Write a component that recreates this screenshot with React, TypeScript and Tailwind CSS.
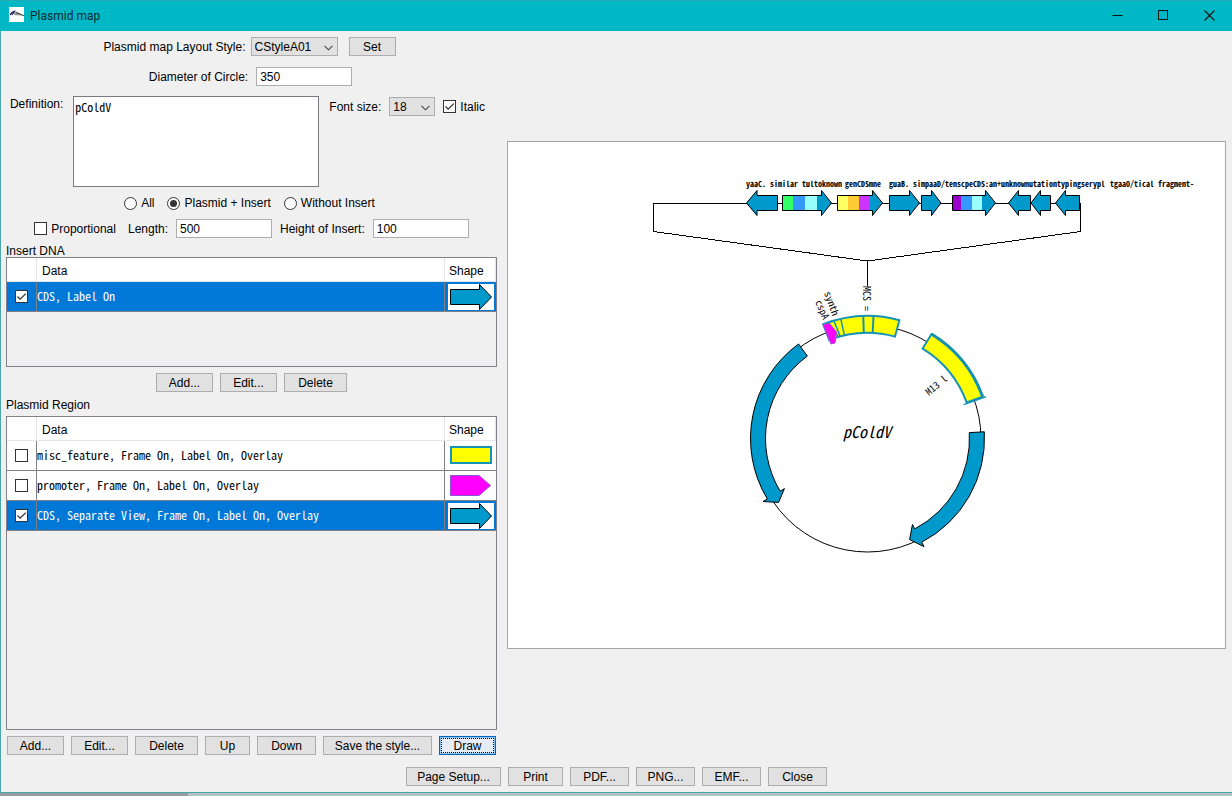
import type { ReactNode } from "react";

const CX = 867.5;
const CY = 438.5;

function pt(r: number, deg: number) {
  const a = (deg * Math.PI) / 180;
  return `${(CX + r * Math.cos(a)).toFixed(2)} ${(CY + r * Math.sin(a)).toFixed(2)}`;
}

function band(outer: number, inner: number, from: number, to: number) {
  return `M${pt(outer, from)}A${outer} ${outer} 0 0 1 ${pt(outer, to)}L${pt(inner, to)}A${inner} ${inner} 0 0 0 ${pt(inner, from)}Z`;
}

function arcArrow(from: number, to: number, tip: number) {
  const s = to > from ? 1 : 0;
  return `M${pt(117, from)}A117 117 0 0 ${s} ${pt(117, to)}L${pt(122, to)}L${pt(109.5, tip)}L${pt(97, to)}L${pt(102, to)}A102 102 0 0 ${1 - s} ${pt(102, from)}Z`;
}

type Gene = { tail: number; neck: number; tip: number; bands?: [number, number, string][] };

const genes: Gene[] = [
  { tail: 777.5, neck: 757, tip: 746.5 },
  {
    tail: 782.5,
    neck: 821.5,
    tip: 831.5,
    bands: [
      [783, 793, "#33ff66"],
      [793, 805, "#3399ff"],
      [805, 817, "#99ffff"],
    ],
  },
  {
    tail: 837.5,
    neck: 872.5,
    tip: 882.5,
    bands: [
      [838, 848, "#ffff66"],
      [848, 859, "#ffcc33"],
      [859, 870, "#cc33ff"],
    ],
  },
  { tail: 889.5, neck: 909.5, tip: 919.5 },
  { tail: 921.5, neck: 931.5, tip: 941 },
  {
    tail: 952.5,
    neck: 985.5,
    tip: 995.5,
    bands: [
      [953, 961, "#9900cc"],
      [961, 972, "#3399ff"],
      [972, 982, "#99ffff"],
    ],
  },
  { tail: 1030.5, neck: 1018.5, tip: 1008.5 },
  { tail: 1050.5, neck: 1040.5, tip: 1031 },
  { tail: 1079.5, neck: 1065.5, tip: 1055.5 },
];

const geneLabels: [number, string][] = [
  [746, "yaaC. similar"],
  [802, "tultoknown"],
  [845, "genCDSmne"],
  [889, "guaB. simpaaD/"],
  [945, "tenscpeCDS:an+unknownutationtypingserypl"],
  [1110, "tgaaO/tical fragment-"],
];

function PlasmidDrawing() {
  return (
    <svg
      viewBox="508 142 717 506"
      className="block w-full font-['Noto_Sans_Mono_CJK_JP','Liberation_Mono',monospace]"
      role="img"
      aria-label="pColdV"
    >
      <g fill="none" stroke="#000" strokeWidth="1">
        <path d="M1080.5 203.5V231.5L867.5 261L653.5 231.5V203.5H1080.5" shapeRendering="crispEdges" />
        <path d="M867.5 261V286" />
        <circle cx={CX} cy={CY} r="113.5" />
      </g>

      {genes.map((g) => (
        <g key={g.tail}>
          <path d={`M${g.tail} 195.5H${g.neck}V190.5L${g.tip} 203L${g.neck} 215.5V210.5H${g.tail}Z`} fill="#0099cc" />
          {g.bands?.map(([a, b, c]) => (
            <rect key={a} x={a} y="196" width={b - a} height="14" fill={c} />
          ))}
          <path
            d={`M${g.tail} 195.5H${g.neck}V190.5L${g.tip} 203L${g.neck} 215.5V210.5H${g.tail}Z`}
            fill="none"
            stroke="#000"
          />
        </g>
      ))}

      <g fontSize="8" fontWeight="700">
        {geneLabels.map(([x, t]) => (
          <text key={x} x={x} y="187">
            {t}
          </text>
        ))}
      </g>

      <g fill="#0099cc" stroke="#000">
        <path d={arcArrow(233.9, 148.9, 144.3)} />
        <path d={arcArrow(-3.3, 62.4, 67.4)} />
      </g>

      <g fill="#ffff00" stroke="#1593b5" strokeWidth="2">
        <path d={band(122.5, 105.5, -111.2, -74.9)} />
        <path d={band(122.5, 105.5, -58.5, -20)} />
        <path d={`M${pt(122.5, -58.5)}A122.5 122.5 0 0 1 ${pt(122.5, -20)}`} fill="none" strokeWidth="3" />
        <g strokeWidth="1.5">
          <path d={`M${pt(122, -108.5)}L${pt(106, -106)}`} />
          <path d={`M${pt(122, -105.9)}L${pt(106, -105)}`} />
          <path d={`M${pt(122, -102.6)}L${pt(106, -102.6)}`} />
          <path d={`M${pt(125.5, -19.4)}L${pt(102, -19.4)}`} />
        </g>
        <path d={`M${pt(122, -92)}L${pt(106, -92)}`} />
        <path d={`M${pt(122, -87.2)}L${pt(106, -87.2)}`} />
      </g>
      <path d="M823 324.5L829.5 323.5L836.5 332L835 343L831 344Z" fill="#ff00ff" stroke="#a04fd8" strokeWidth="1" />

      <text transform="translate(863 286) rotate(90)" fontSize="10">
        MCS =
      </text>
      <text transform="translate(824 293) rotate(70)" fontSize="10">
        synth
      </text>
      <text transform="translate(815 302) rotate(66)" fontSize="10">
        cspA
      </text>
      <text transform="translate(929 396) rotate(-40)" fontSize="10">
        M13 l
      </text>
      <text x="867" y="438" textAnchor="middle" fontSize="16" fontStyle="italic">
        pColdV
      </text>
    </svg>
  );
}

function Button({ children, width }: { children: ReactNode; width: string }) {
  return (
    <button type="button" className={`h-[19px] border border-[#adadad] bg-[#e1e1e1] text-center leading-4 whitespace-nowrap ${width}`}>
      {children}
    </button>
  );
}

function Check({ label, checked = false, hideLabel = false }: { label: string; checked?: boolean; hideLabel?: boolean }) {
  return (
    <label className="inline-flex items-center gap-1">
      <span className="grid">
        <input
          type="checkbox"
          defaultChecked={checked}
          aria-label={hideLabel ? label : undefined}
          className="peer col-start-1 row-start-1 size-[13px] appearance-none border border-[#333] bg-white"
        />
        <svg viewBox="0 0 13 13" className="pointer-events-none col-start-1 row-start-1 hidden size-[13px] peer-checked:block">
          <path d="M2.5 6.5L5.2 9.2L10.8 3.6" fill="none" stroke="#333" strokeWidth="1.3" />
        </svg>
      </span>
      {!hideLabel && label}
    </label>
  );
}

function Radio({ label, checked = false }: { label: string; checked?: boolean }) {
  return (
    <label className="inline-flex items-center gap-1">
      <span className="grid place-items-center">
        <input
          type="radio"
          name="view"
          defaultChecked={checked}
          className="peer col-start-1 row-start-1 size-[13px] appearance-none rounded-full border border-[#333] bg-white"
        />
        <span className="pointer-events-none col-start-1 row-start-1 hidden size-[7px] rounded-full bg-[#333] peer-checked:block" />
      </span>
      {label}
    </label>
  );
}

function Select({ id, value, width }: { id: string; value: string; width: string }) {
  return (
    <span className={`grid items-center ${width}`}>
      <select
        id={id}
        defaultValue={value}
        className="col-start-1 row-start-1 h-[19px] w-full appearance-none border border-[#adadad] bg-[#e1e1e1] pl-[3px] leading-4"
      >
        <option>{value}</option>
      </select>
      <svg viewBox="0 0 9 6" className="pointer-events-none col-start-1 row-start-1 mt-[3px] mr-[5px] h-[6px] w-[9px] justify-self-end">
        <path d="M0.5 0.8L4.5 4.8L8.5 0.8" fill="none" stroke="#444" strokeWidth="1.1" />
      </svg>
    </span>
  );
}

function TextField({ id, value }: { id: string; value: string }) {
  return (
    <input id={id} type="text" defaultValue={value} className="h-[19px] w-24 border border-[#adadad] bg-white px-[3px] leading-4" />
  );
}

function Shape({ kind }: { kind: "arrow" | "box" | "tag" }) {
  return (
    <svg viewBox="0 0 46 26" className="block h-[26px] w-[46px]">
      {kind === "arrow" && <path d="M2.5 5.5H31.5V0.5L43.5 13L31.5 25.5V20.5H2.5Z" fill="#0099cc" stroke="#000" />}
      {kind === "box" && <rect x="3" y="4" width="40" height="16" fill="#ffff00" stroke="#1593b5" strokeWidth="2" />}
      {kind === "tag" && <path d="M2.5 2.5H31L42.5 12.5L31 22.5H2.5Z" fill="#ff00ff" stroke="#8a55cf" />}
    </svg>
  );
}

type Row = { text: string; shape: "arrow" | "box" | "tag"; on?: boolean };

function FeatureTable({ label, rows }: { label: string; rows: Row[] }) {
  return (
    <table aria-label={label} className="w-full table-fixed border-separate border-spacing-0 text-left">
      <colgroup>
        <col className="w-[30px]" />
        <col />
        <col className="w-[51px]" />
      </colgroup>
      <thead>
        <tr className="h-6 bg-white">
          <td className="border-r border-b border-[#e5e5e5]" />
          <th className="border-r border-b border-[#e5e5e5] pt-[3px] pb-px pl-[5px] font-normal">Data</th>
          <th className="border-r border-b border-[#e5e5e5] pt-[3px] pb-px pl-1 font-normal">Shape</th>
        </tr>
      </thead>
      <tbody>
        {rows.map((r) => (
          <tr key={r.text} className={r.on ? "h-[30px] bg-[#0078d7] text-white" : "h-[30px] bg-white"}>
            <td className="border-r border-b border-[#7f7f86] p-0 pl-2">
              <span className="flex">
                <Check label={r.text} checked={r.on} hideLabel />
              </span>
            </td>
            <td className="border-r border-b border-[#7f7f86] p-0 pb-0.5 font-['Noto_Sans_Mono_CJK_JP','Liberation_Mono',monospace] whitespace-nowrap">
              {r.text}
            </td>
            <td className="border-b border-[#7f7f86] p-0">
              <span className="mx-auto block w-[46px] bg-white">
                <Shape kind={r.shape} />
              </span>
            </td>
          </tr>
        ))}
      </tbody>
    </table>
  );
}

export default function App() {
  return (
    <div className="flex min-h-screen flex-col bg-[#f0f0f0] font-['Liberation_Sans',sans-serif] text-[12px] leading-4 text-black">
      <header className="flex h-[31px] items-center border-t border-[#1fa9b6] bg-[#00b7c6] pl-[9px]">
        <svg viewBox="0 0 15 15" className="mb-[3px] size-[15px]">
          <rect width="15" height="15" fill="#fff" />
          <path d="M4.5 6.5L7 4.5L15 8.5L6 8.2Z" fill="#9a9a9a" />
          <path d="M7 5.5L15 8.7" stroke="#222" strokeWidth="0.8" />
          <path d="M1 8L3.2 5.3L5.5 4.5L3 8" fill="none" stroke="#1c1c66" strokeWidth="1.2" />
        </svg>
        <h1 className="ml-1.5 flex-1 font-['Roboto',sans-serif] text-[12px] text-[#0b2a2e]">Plasmid map</h1>
        <button type="button" aria-label="Minimize" className="grid h-full w-[46px] place-items-center pb-0.5">
          <svg viewBox="0 0 11 11" className="size-[11px]">
            <path d="M0.5 5.5H10.5" stroke="#111" />
          </svg>
        </button>
        <button type="button" aria-label="Maximize" className="grid h-full w-[46px] place-items-center pb-0.5">
          <svg viewBox="0 0 11 11" className="size-[11px]">
            <rect x="0.5" y="0.5" width="9" height="9" fill="none" stroke="#111" />
          </svg>
        </button>
        <button type="button" aria-label="Close window" className="grid h-full w-[46px] place-items-center pb-0.5">
          <svg viewBox="0 0 11 11" className="size-[11px]">
            <path d="M0.5 0.5L10.5 10.5M10.5 0.5L0.5 10.5" stroke="#111" strokeWidth="1.1" />
          </svg>
        </button>
      </header>

      <div className="flex flex-1 flex-col border-b border-l border-[#4aa5ab] pt-1 pb-1.5">
        <main className="flex flex-1 items-stretch gap-[10px] pr-1.5 pl-[5px]">
          <section className="flex w-[491px] shrink-0 flex-col pt-0.5">
            <div className="flex h-[19px] items-center justify-center pr-1">
              <label htmlFor="style" className="mr-[5px]">
                Plasmid map Layout Style:
              </label>
              <Select id="style" value="CStyleA01" width="w-[87px]" />
              <span className="ml-[11px] flex">
                <Button width="w-[47px]">Set</Button>
              </span>
            </div>
            <div className="mt-[11px] flex h-[19px] items-center justify-center gap-2 pr-0.5">
              <label htmlFor="diameter">Diameter of Circle:</label>
              <TextField id="diameter" value="350" />
            </div>
            <div className="mt-[10px] flex items-start justify-center gap-[10px] pr-2">
              <label htmlFor="definition">Definition:</label>
              <textarea
                id="definition"
                defaultValue="pColdV"
                className="block h-[91px] w-[246px] resize-none border border-[#7a7a80] bg-white px-px py-0.5 font-['Noto_Sans_Mono_CJK_JP','Liberation_Mono',monospace] leading-4"
              />
              <div className="flex h-[21px] items-center gap-2">
                <label htmlFor="fontsize">Font size:</label>
                <Select id="fontsize" value="18" width="w-[46px]" />
                <Check label="Italic" checked />
              </div>
            </div>
            <div className="mt-2 flex h-4 items-center justify-center gap-[13px] pr-1">
              <Radio label="All" />
              <Radio label="Plasmid + Insert" checked />
              <Radio label="Without Insert" />
            </div>
            <div className="mt-2 flex h-[19px] items-center justify-center gap-2">
              <span className="mr-1 flex">
                <Check label="Proportional" />
              </span>
              <label htmlFor="length">Length:</label>
              <TextField id="length" value="500" />
              <label htmlFor="height">Height of Insert:</label>
              <TextField id="height" value="100" />
            </div>
            <h2 className="mt-[5px] h-[14px]">Insert DNA</h2>
            <div className="h-[110px] border border-[#828288]">
              <FeatureTable label="Insert DNA" rows={[{ text: "CDS, Label On", shape: "arrow", on: true }]} />
            </div>
            <div className="mt-1.5 flex justify-center gap-[7px]">
              <Button width="w-[57px]">Add...</Button>
              <Button width="w-[57px]">Edit...</Button>
              <Button width="w-[63px]">Delete</Button>
            </div>
            <h2 className="mt-[5px] h-[19px]">Plasmid Region</h2>
            <div className="flex-1 border border-[#828288]">
              <FeatureTable
                label="Plasmid Region"
                rows={[
                  { text: "misc_feature, Frame On, Label On, Overlay", shape: "box" },
                  { text: "promoter, Frame On, Label On, Overlay", shape: "tag" },
                  { text: "CDS, Separate View, Frame On, Label On, Overlay", shape: "arrow", on: true },
                ]}
              />
            </div>
            <div className="mt-1.5 flex justify-center gap-[7px]">
              <Button width="w-[57px]">Add...</Button>
              <Button width="w-[57px]">Edit...</Button>
              <Button width="w-[63px]">Delete</Button>
              <Button width="w-[45px]">Up</Button>
              <Button width="w-[59px]">Down</Button>
              <Button width="w-[109px]">Save the style...</Button>
              <button type="button" className="grid h-[19px] w-[57px] border border-[#0067c0] bg-[#8cc4f0] p-px leading-4">
                <span className="flex items-center justify-center border border-dotted border-black bg-[#e5ecf5] leading-3">
                  Draw
                </span>
              </button>
            </div>
          </section>

          <section className="flex min-w-0 flex-1 items-center">
            <div className="w-full border border-[#a5a5a5] bg-white">
              <PlasmidDrawing />
            </div>
          </section>
        </main>

        <footer className="mt-3 flex justify-center gap-[7px]">
          <Button width="w-[95px]">Page Setup...</Button>
          <Button width="w-[55px]">Print</Button>
          <Button width="w-[59px]">PDF...</Button>
          <Button width="w-[59px]">PNG...</Button>
          <Button width="w-[59px]">EMF...</Button>
          <Button width="w-[59px]">Close</Button>
        </footer>
      </div>
      <div className="flex h-[3px] bg-[#adc0c2]">
        <div className="w-[188px] bg-[#989da3]" />
      </div>
    </div>
  );
}
